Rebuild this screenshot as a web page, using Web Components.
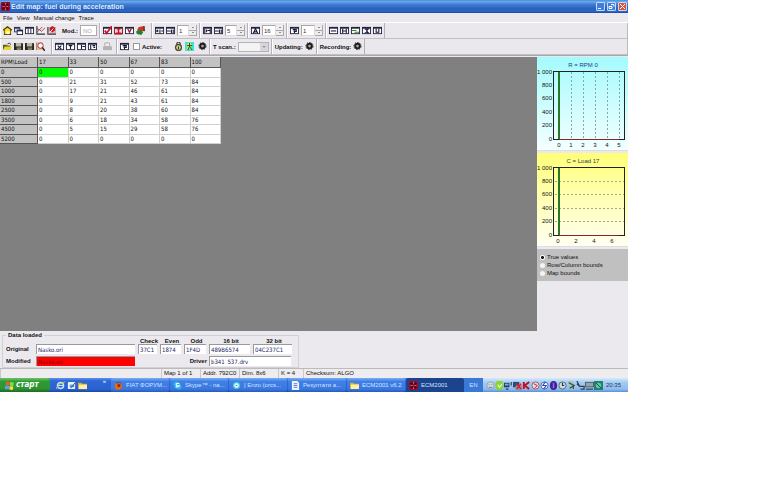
<!DOCTYPE html>
<html lang="en">
<head>
<meta charset="utf-8">
<title>Edit map: fuel during acceleration</title>
<style>
  body { margin: 0; background: #fff; padding-right: 148px; font: 6px/8px "Liberation Sans", Arial, sans-serif; color: #111; }
</style>
</head>
<body>
<ecm-window></ecm-window>
<script>
const BASE = `<style>*{box-sizing:border-box} :host{display:block} input,select,button{font:inherit;color:inherit;margin:0;padding:0;border:0;border-radius:0;background:none;min-width:0;outline:0} button{cursor:pointer}</style>`;
function define(name, render) {
  customElements.define(name, class extends HTMLElement {
    constructor() { super(); this.attachShadow({ mode: 'open' }); }
    connectedCallback() { this.shadowRoot.innerHTML = BASE + render(this); }
  });
}

const box = (inner, fill = '#fff') => `<rect x="0" y="1" width="10" height="8" fill="#23233c"/><rect x="1" y="3" width="8" height="5" fill="${fill}"/>${inner}`;
const S = (d, c = '#15153c', w = 1.2) => `<path d="${d}" fill="none" stroke="${c}" stroke-width="${w}"/>`;
const disk = `<path d="M0 1h9l1 1v7H0z" fill="#25251c"/><path d="M2 1h6v4H2z" fill="#b9b8a8"/><path d="M3 6h5v3H3z" fill="#807c60"/>`;
const globe = c => `<circle cx="5" cy="5" r="4" fill="${c}"/>`;
const ICONS = {
  home: `<path d="M0 4L5 0l5 4v1H9v5H1V5H0z" fill="#4b3a08"/><path d="M2 4l3-2 3 2v4H2z" fill="#ffe21f"/><path d="M2 5h6v4H2z" fill="#ffe21f"/><path d="M4 6h3v3H4z" fill="#fff"/>`,
  windows: `<path d="M0 1h7v6H0z" fill="#343454"/><path d="M1 3h5v3H1z" fill="#dde"/><path d="M3 4h7v6H3z" fill="#252547"/><path d="M4 6h5v3H4z" fill="#fff"/>`,
  cols: box(S('M3.500 3v5M6.500 3v5', '#15153c', 1)),
  graph: `<path d="M0 0h10v10H0z" fill="#eee"/>${S('M1 0v9h9', '#333')}${S('M1 7l3-3 2 2 4-4M1 3l3 1 3-3', '#a22c46', 1)}`,
  graphred: `<path d="M0 1h10v9H0z" fill="#d6b2b8"/>${S('M1 1v8h9', '#444')}<path d="M3 2l3-2 3 2v3L6 7 3 5z" fill="#c31e2d"/>${S('M2 8l5-5', '#fff', 1)}`,
  edit: box(S('M2 5l2 3 6-8', '#d21020', 2)),
  editred: box(S('M3 3h4M5 3v5M2 8h6', '#c01228', 1.600) + S('M.5 1v8h9V1', '#b01828', 1), '#f6d4d4'),
  undo: box(S('M3 3l2 4 2-4', '#8b1c3c', 1.400)),
  flag: `<path d="M3 1l6-1 1 5-4 1-5-1z" fill="#d33424"/><path d="M0 6l5-2 3 3-2 3-5-1z" fill="#228232"/>${S('M9 0v6', '#222', 1)}`,
  plusminus: box(S('M1 5.500h3M2.500 4v3M5.500 4v4M7 5.500h2')),
  equals: box(S('M1 5.500h4M6 4v4M8 4v4')),
  percent: box(S('M2 3v5M4 4v3M5 5h3M8 3v5')),
  letterA: box(S('M2.500 8L5 3l2.500 5M3 6.500h4')),
  filter: box(S('M3 4h4v2H4M5 5v3')),
  minus: box(S('M2 5.500h6')),
  hbar: box(S('M3 3v5M7 3v5M3 5.500h4')),
  green: box(S('M1 5h5M4 7h5', '#3b811f')),
  ex: box(S('M3 3.500h4L5 5.500l2 2H3')),
  vbar: box(S('M3.500 3v4h3V3')),
  open: `<path d="M0 3h4l1 1h3v5H0z" fill="#655c10"/><path d="M2 5h8L8 9H0z" fill="#e3d63d"/>${S('M5 2q2-2 4 1', '#222', 1)}`,
  save: disk,
  find: `<path d="M0 0h7v9H0z" fill="#e7bd9c"/><circle cx="5" cy="4" r="3" fill="#fff" stroke="#a3202a"/>${S('M7 6l3 4', '#292929', 1.800)}${S('M0 1v8', '#842', 1)}`,
  zed: box(S('M3 4l4 4M7 4L3 8')),
  tee: box(S('M3 4h4M5 4v4')),
  list: box(S('M5 3v5M6 5h3')),
  split: box(S('M3 3v5M5 4h3M6 6h2')),
  print: `<path d="M2 1h5l1 4H2z" fill="#eee" stroke="#aaa"/><path d="M0 5h10v4H0z" fill="#b4b3b8"/>`,
  lock: `<circle cx="5" cy="6" r="4" fill="#50502c"/><circle cx="5" cy="6" r="2.500" fill="#d6d69a"/>${S('M3 3q0-3 2-3t2 3M5 5v3', '#333')}`,
  run: `<path d="M0 0h10v10H0z" fill="#35e5e0"/><path d="M5 0l3 4-2 1 3 5-4-3-4 3 2-5-2-1z" fill="#f2ee22"/>${S('M5 1v4L3 9M5 5l3 4M2 4h6', '#234', 1)}`,
  gear: `<circle cx="5" cy="4.500" r="3.600" fill="#1e1e1e"/><circle cx="5" cy="4.500" r="4" fill="none" stroke="#222" stroke-width="1" stroke-dasharray="1.700 1.300"/><circle cx="5" cy="4.500" r="1.500" fill="#aaa"/>`,
  app: `<path d="M0 0h10v10H0z" fill="#9a0e2c"/>${S('M1 3h8M1 7h8M3 1v8M7 1v8', '#3d0718', 1)}${S('M2 5h2M6 5h2M5 1v2M5 7v2', '#f06a7a', 1)}`,
  windowsflag: `<path d="M1 1q2-1 4 0v4q-2-1-4 0z" fill="#f2582b"/><path d="M5.500 1q2 1 4 0v4q-2 1-4 0z" fill="#8fd943"/><path d="M0 5.500q2-1 4.500 0v4q-2-1-4.500 0z" fill="#58a0f4"/><path d="M5 5.500q2 1 4 0v4q-2 1-4 0z" fill="#fddb38"/>`,
  ie: `<circle cx="5" cy="5" r="3.400" fill="none" stroke="#bfe6ff" stroke-width="1.600"/>${S('M2 5h6', '#bfe6ff')}${S('M0 9Q3 2 10 1', '#e6c75a', 1)}`,
  desk: `<rect x="1" y="1" width="8" height="8" rx="1" fill="#e9f3ff"/><path d="M3 4h5v3H3z" fill="#5aa0dc"/>${S('M4 8l5-6', '#446', 1)}`,
  folder: `<path d="M0 2h4l1 1h5v6H0z" fill="#d8ab38"/><path d="M1 4h9v5H1z" fill="#fff0a0"/>`,
  fox: `${globe('#3558a0')}<path d="M1 2l2 1q5-2 6 2 0 4-4 5-5-1-4-5z" fill="#e06b1c"/><circle cx="5.500" cy="5" r="1.700" fill="#8d2a12"/>`,
  skype: `<circle cx="3.500" cy="3.500" r="3" fill="#29b6f0"/><circle cx="6.500" cy="6.500" r="3" fill="#29b6f0"/><circle cx="5" cy="5" r="3.500" fill="#29b6f0"/>${S('M7 3Q3 2 3.500 4t3 1.500T3 7', '#fff')}`,
  chat: `${globe('#42cfe5')}<circle cx="5" cy="5" r="2.500" fill="#fff"/>${S('M4 5h2', '#299', 1)}`,
  doc: `<path d="M1 0h6l2 2v8H1z" fill="#eef5ff"/>${S('M3 3h4M3 5h4M3 7h4', '#4e79c8', 1)}`,
  t1: `<circle cx="5" cy="5" r="4" fill="#d4dce2" stroke="#91a2b2"/>${S('M3 4h1M6 4h1M3 7h4', '#678', 1)}`,
  t2: `<path d="M2 0h6l2 5-3 5H2L0 4z" fill="#8bd331"/>${S('M3 4l2 3 3-4', '#effcd0')}`,
  t3: `<path d="M0 2h6v5H0z" fill="#263d70"/><path d="M1 3h4v2H1z" fill="#7cb0e8"/>${S('M8 1v4M2 9h3', '#334')}`,
  t4: `<path d="M0 1h7v6H0z" fill="#364874"/><path d="M3 5h7v5H3z" fill="#8893b0"/>${S('M4 3l5 6M9 3L4 9', '#e51a26', 1.500)}`,
  t5: `${S('M2 1v8M8 1L3 5l5 4', '#c3101c', 2.200)}`,
  t6: `<circle cx="5" cy="5" r="4" fill="#e9d7dd" stroke="#a55668"/>${S('M3 3l4 2-3 3', '#b22', 1)}`,
  t7: `<circle cx="5" cy="5" r="4" fill="#f2f6ff" stroke="#4961ac"/>${S('M6 1L3 5h4L4 9', '#2a50b4')}`,
  t8: `<ellipse cx="5" cy="5" rx="4" ry="5" fill="#422298"/>${S('M5 2v6', '#a86ce8', 1.500)}`,
  t9: `<circle cx="5" cy="5" r="4" fill="#ccd8e3" stroke="#566"/>${S('M5 2v3h2', '#234')}`,
  t10: `<path d="M1 0h5l2 4 1 5H3z" fill="#a9c0b6"/>${S('M2 2l6 3-5 3M7 6v3', '#274b32')}`,
  t11: `${S('M1 0l3 6h5v3H5M1 3l3 3', '#38424c', 1.400)}`,
  t12: `<path d="M0 1h10v6H0z" fill="#515c68"/><path d="M1 2h8v4H1z" fill="#92a4b0"/>${S('M1 9h8', '#333')}`,
  t13: `<path d="M0 0h10v10H0z" fill="#23806f"/><circle cx="5" cy="5" r="3" fill="#62c79c"/>${S('M2 2l6 6', '#164d49', 1)}`
};
define('ecm-icon', el => `<style>:host{width:9px;height:9px;flex:none}svg{display:block;width:100%;height:100%}</style><svg viewBox="0 0 10 10" aria-hidden="true">${ICONS[el.getAttribute('name')]}</svg>`);

define('tool-button', el => `<style>button{display:block;width:9px;height:9px}</style><button type="button" aria-label="${el.getAttribute('icon')}"><ecm-icon name="${el.getAttribute('icon')}"></ecm-icon></button>`);

define('tool-group', el => `<style>:host{display:flex;align-items:center;gap:2px;padding:0 2px;height:100%;border-right:1px solid #b4b2b8;border-left:1px solid #fff;white-space:nowrap}:host([bold]){font-weight:bold}</style><slot></slot>`);

define('tool-spin', el => `<style>
  :host{display:flex;height:11px;width:20px}
  :host([wide]){width:22px}
  input{flex:1;width:0;height:11px;background:#fff;border:1px solid #a9a8ae;border-right-color:#ddd;border-bottom-color:#ddd;padding-left:1px;color:#333}
  span{display:flex;flex-direction:column;width:8px}
  button{flex:1;display:flex;align-items:center;justify-content:center;background:#eeecee;border-right:1px solid #aaa;border-bottom:1px solid #aaa}
  i{border:1px solid transparent;border-bottom:1px solid #333;border-top:0}
  button:last-child i{border-bottom:0;border-top:1px solid #333}
</style><input aria-label="${el.getAttribute('label')}" value="${el.getAttribute('value')}"><span><button type="button" aria-label="Up"><i></i></button><button type="button" aria-label="Down"><i></i></button></span>`);

define('title-bar', () => `<style>
  :host{display:flex;align-items:center;height:13px;padding:0 1px 0 1px;gap:1px;color:#dfeaff;font:bold 7px/9px "Liberation Sans",sans-serif;background:linear-gradient(#4a8be0,#68a6ec 12%,#3f7dd2 35%,#2a62bd 65%,#2b64c4 90%,#1c4694)}
  h1{font:inherit;margin:0;flex:1}
  div{display:flex;gap:2px}
  button{width:9px;height:9px;border:1px solid #c5dafa;border-radius:1px;background:#3f7fdc;display:flex}
  button:last-child{background:#d8563c}
  svg{width:7px;height:7px;fill:none;stroke:#fff}
</style><ecm-icon name="app"></ecm-icon><h1>Edit map: fuel during acceleration</h1>
<div><button type="button" aria-label="Minimize"><svg viewBox="0 0 7 7"><path d="M1 5.500h3"/></svg></button><button type="button" aria-label="Restore"><svg viewBox="0 0 7 7"><path d="M1 3.500h3v2H1zM3 1.500h3v2"/></svg></button><button type="button" aria-label="Close"><svg viewBox="0 0 7 7"><path d="M1 1l5 5M6 1L1 6"/></svg></button></div>`);

define('menu-bar', () => `<style>:host{display:flex;height:10px;padding:0 3px;gap:4px;background:#ece9ee;align-items:center;border-bottom:1px solid #fff}</style>
<button type="button">File</button><button type="button">View</button><button type="button">Manual change</button><button type="button">Trace</button>`);

const btns = s => s.split(' ').map(n => `<tool-button icon="${n}"></tool-button>`).join('');
define('tool-bars', () => `<style>
  :host{background:#eae8ec;border-bottom:1px solid #aaa8ae;border-right:1px solid #bbb}
  .row{display:flex;height:16px;align-items:center;border-bottom:1px solid #c2c0c6}
  label{font-weight:bold}
  .mod{width:17px;height:11px;background:#fff;border:1px solid #aaa;color:#aaa;padding-left:2px}
  .check{appearance:none;width:7px;height:7px;background:#fff;border:1px solid #999}
  select{appearance:none;width:31px;height:10px;background:#f4f3f4 linear-gradient(#d8d6da,#d8d6da) right/8px 100% no-repeat;border:1px solid #b5b3b8}
  .combo{position:relative;display:flex}
  .combo::after{content:"";position:absolute;right:3px;top:4px;border:2px solid transparent;border-top-color:#999;border-bottom:0}
  .g{width:2px}
  .wide{width:8px}
</style>
<div class="row">
  <tool-group>${btns('home windows cols graph graphred')}<span class="g"></span><label for="mod">Mod.:</label><input id="mod" class="mod" value="NO" disabled></tool-group>
  <tool-group>${btns('edit editred undo flag')}<span class="g"></span></tool-group>
  <tool-group>${btns('plusminus equals')}<tool-spin label="Step" value="1"></tool-spin></tool-group>
  <tool-group>${btns('percent equals')}<tool-spin label="Percent" value="5"></tool-spin></tool-group>
  <tool-group>${btns('letterA')}<tool-spin wide label="Average" value="16"></tool-spin></tool-group>
  <tool-group>${btns('filter')}<tool-spin wide label="Filter" value="1"></tool-spin></tool-group>
  <tool-group>${btns('minus hbar green ex vbar')}</tool-group>
</div>
<div class="row">
  <tool-group>${btns('open save save find')}<span class="g"></span></tool-group>
  <tool-group>${btns('zed tee list split')}<span class="g"></span>${btns('print')}<span></span></tool-group>
  <tool-group>${btns('filter')}<span></span><input type="checkbox" class="check" id="active"><label for="active">Active:</label><span class="wide"></span>${btns('lock run')}<span></span>${btns('gear')}</tool-group>
  <tool-group><label for="scan">T scan.:</label><span class="combo"><select id="scan"><option></option></select></span></tool-group>
  <tool-group bold>Updating: ${btns('gear')}</tool-group>
  <tool-group bold>Recording: ${btns('gear')}</tool-group>
</div>`);

const LOADS = [17, 33, 50, 67, 83, 100];
const ROWS = [[0, 0,0,0,0,0,0],[500, 0,21,31,52,73,84],[1000, 0,17,21,46,61,84],[1800, 0,9,21,43,61,84],[2500, 0,8,20,38,60,84],[3500, 0,6,18,34,58,76],[4500, 0,5,15,29,58,76],[5200, 0,0,0,0,0,0]];
define('map-table', () => `<style>
  :host{font:6px/8px "DejaVu Sans Condensed","DejaVu Sans",sans-serif}
  table{border-collapse:separate;border-spacing:0;table-layout:fixed;width:221px;height:87px;background:#fff}
  col:first-child{width:38px}
  th,td{font-weight:normal;text-align:left;padding:0 1px;border-right:1px solid #d0d0d0;border-bottom:1px solid #d0d0d0;line-height:8px;overflow:hidden}
  th{background:#c2c2c2;border-color:#555}
  thead th{height:11px}
  .on{background:#0f0}
</style><table><colgroup><col><col><col><col><col><col><col></colgroup><thead><tr><th scope="col">RPM\\Load</th>${LOADS.map(v => `<th scope="col">${v}</th>`).join('')}</tr></thead>
<tbody>${ROWS.map((r, i) => `<tr>${r.map((v, j) => j ? `<td${i === 0 && j === 1 ? ' class="on"' : ''}>${v}</td>` : `<th scope="row">${v}</th>`).join('')}</tr>`).join('')}</tbody></table>`);

define('map-chart', el => {
  const row = el.getAttribute('axis') === 'row';
  const ys = [1000, 800, 600, 400, 200, 0];
  const xs = row ? [0,1,2,3,4,5].map(v => [v, 22 + v * 12]) : [0,2,4,6].map(v => [v, 21 + v * 9]);
  return `<style>
    :host{padding:0 0 2px;background:linear-gradient(${row ? '#a4fbfd,#f4ffff' : '#ffff78,#fffff2'});border-bottom:1px solid #ddd}
    svg{display:block;width:100%;font:6px "Liberation Sans",sans-serif;fill:#111}
  </style><svg viewBox="0 0 91 91" role="img" aria-label="${el.getAttribute('heading')}">
  <text x="46" y="10" text-anchor="middle" fill="${row ? '#1c3a8a' : '#3a3a50'}">${el.getAttribute('heading')}</text>
  <g stroke="${row ? '#86a8ac' : '#a5a58c'}" stroke-dasharray="2 2">${row ? xs.slice(1).map(x => `<path d="M${x[1]}.5 15v67"/>`).join('') : [28,41,55,68].map(y => `<path d="M18 ${y}.5h70"/>`).join('')}</g>
  <rect x="16.500" y="14.500" width="71" height="68" fill="none" stroke="#222"/>
  <path d="M22 82.500h60" stroke="#8b2525"/>
  <path d="M22 15v67" stroke="#287828" stroke-width="2"/>
  ${ys.map((v, i) => `<text x="15" y="${[17,30,43,57,70,84][i]}" text-anchor="end">${v === 1000 ? '1 000' : v}</text>`).join('')}
  ${xs.map(x => `<text x="${x[1]}" y="90" text-anchor="middle">${x[0]}</text>`).join('')}
  </svg>`;
});

define('bounds-options', () => `<style>
  :host{background:#c0c0c0;margin-top:2px;padding:4px 3px}
  label{display:flex;align-items:center;gap:2px}
  input{appearance:none;width:5px;height:5px;border-radius:50%;background:#f4f4f4}
  input:checked{background:radial-gradient(#111 0 1px,#fff 2px)}
</style>${['True values','Row/Column bounds','Map bounds'].map((t, i) => `<label><input type="radio" name="bounds"${i ? '' : ' checked'}>${t}</label>`).join('')}`);

define('data-panel', () => `<style>
  :host{background:#ece9ee;padding:0 2px}
  fieldset{margin:0;border:1px solid #d2d0d6;padding:0 3px 1px;min-width:0;width:297px}
  legend{font-weight:bold;padding:0 2px;line-height:8px}
  .grid{display:grid;grid-template-columns:30px 102px 22px 24px 25px 44px 42px;grid-template-rows:4px 10px;row-gap:1px;align-items:center;font-weight:bold}
  .grid > .hd{line-height:4px;text-align:center;white-space:nowrap}
  .lower{display:grid;grid-template-columns:30px 99px 1fr 82px 4px;align-items:center;font-weight:bold;margin-top:2px}
  .lower label:nth-of-type(2){text-align:right;padding-right:2px}
  input{height:10px;width:100%;background:#fff;border-top:1px solid #999;border-left:1px solid #999;padding-left:1px;color:#22265e;font:6px/8px "DejaVu Sans Condensed","DejaVu Sans",sans-serif}
  .grid input{width:calc(100% - 3px)}
  .red{background:#f00;color:#8b0000}
</style><fieldset><legend>Data loaded</legend>
<div class="grid"><span></span><span></span><label class="hd" for="c">Check</label><label class="hd" for="e">Even</label><label class="hd" for="o">Odd</label><label class="hd" for="b16">16 bit</label><label class="hd" for="b32">32 bit</label>
<label for="orig">Original</label><input id="orig" value="Nasko.ori"><input id="c" value="37C1"><input id="e" value="1874"><input id="o" value="1F4D"><input id="b16" value="489B6574"><input id="b32" value="04C237C1"></div>
<div class="lower"><label for="m">Modified</label><input id="m" class="red" value="Nasko.ori"><label for="d">Driver</label><input id="d" value="b341_537.drv"></div></fieldset>`);

define('status-bar', () => `<style>
  :host{display:grid;grid-template-columns:161px 39px 39px 39px 25px 1fr;height:10px;background:#eeecef;border-top:1px solid #bbb;line-height:9px;white-space:nowrap}
  span{padding-left:2px;border-left:1px solid #c9c7cc}
</style>${['', 'Map 1 of 1', 'Addr. 792C0', 'Dim. 8x6', 'K = 4', 'Checksum: ALGO'].map(t => `<span>${t}</span>`).join('')}`);

const TASKS = [['fox','FIAT ФОРУМ...'],['skype','Skype™ - na...'],['chat','| Enzo (orcs...'],['doc','Резултати а...'],['folder','ECM2001 v6.2'],['app','ECM2001']];
define('task-bar', () => `<style>
  :host{display:flex;height:14px;align-items:stretch;color:#d3e6ff;background:linear-gradient(#5a95ea,#2f68d4 20%,#2a62d2 80%,#1c46a2);font:6px/14px "Liberation Sans",sans-serif;white-space:nowrap}
  .start{width:50px;display:flex;align-items:center;gap:2px;padding-left:5px;border-radius:0 4px 4px 0;background:linear-gradient(#6bc468,#2f9a34 25%,#2e9432 75%,#1d6b24);color:#fff;font:italic bold 8px/12px "DejaVu Sans Condensed","DejaVu Sans",sans-serif}
  .quick{display:flex;align-items:center;gap:2px;padding-left:6px;width:61px}
  .quick b{margin-left:auto;padding-right:5px;align-self:flex-start;line-height:7px}
  .tasks{display:flex;flex:1;gap:1px;min-width:0}
  .tasks button{flex:1;display:flex;align-items:center;gap:3px;padding:0 3px;overflow:hidden;border-radius:2px;background:linear-gradient(#78aef4,#3f7fe6 25%,#3a78df 80%,#2858ba)}
  .tasks button:last-child{background:#1b438e}
  .lang{width:19px;text-align:center;background:#3a78d8}
  .tray{display:flex;align-items:center;padding:0 7px 0 3px;background:linear-gradient(#d4ebfb,#a4cdf3 30%,#8fbcee 80%,#5a8fd4);color:#1d3660}
  .tray time{margin-left:3px}
</style><button type="button" class="start"><ecm-icon name="windowsflag"></ecm-icon>старт</button>
<div class="quick"><ecm-icon name="ie"></ecm-icon><ecm-icon name="desk"></ecm-icon><ecm-icon name="folder"></ecm-icon><b>»</b></div>
<div class="tasks">${TASKS.map(t => `<button type="button"><ecm-icon name="${t[0]}"></ecm-icon>${t[1]}</button>`).join('')}</div>
<span class="lang">EN</span>
<div class="tray">${[1,2,3,4,5,6,7,8,9,10,11,12,13].map(n => `<ecm-icon name="t${n}"></ecm-icon>`).join('')}<time>20:35</time></div>`);

define('ecm-window', () => `<style>
  .work{display:grid;grid-template-columns:1fr 91px;min-height:275px;background:#ece9ee;padding-top:1px}
  .canvas{background:#808080}
  .side{display:flex;flex-direction:column}
  map-chart + map-chart{margin-top:2px}
</style><title-bar></title-bar><menu-bar></menu-bar><tool-bars></tool-bars>
<div class="work"><div class="canvas"><map-table></map-table></div><div class="side"><map-chart axis="row" heading="R = RPM 0"></map-chart><map-chart axis="col" heading="C = Load 17"></map-chart><bounds-options></bounds-options></div></div>
<data-panel></data-panel><status-bar></status-bar><task-bar></task-bar>`);
</script>
</body>
</html>
